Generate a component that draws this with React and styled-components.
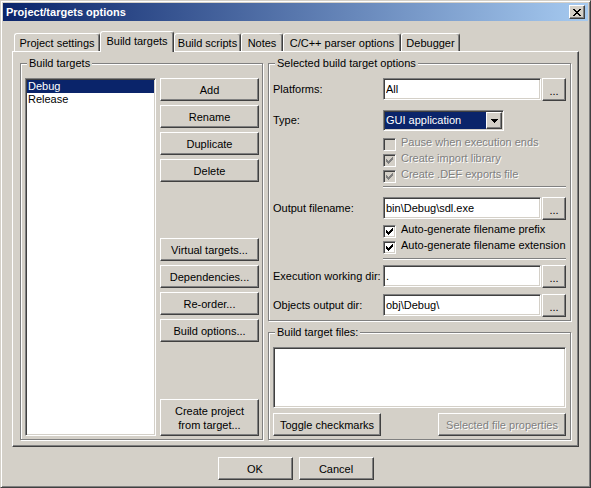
import React from 'react';
import styled, { createGlobalStyle, css } from 'styled-components';

const GlobalStyle = createGlobalStyle`
  html, body {
    margin: 0;
    padding: 0;
    background: #d4d0c8;
  }
  body {
    font-family: "Liberation Sans", Arial, sans-serif;
    font-size: 11px;
    color: #000;
  }
  * {
    box-sizing: border-box;
  }
`;

const raised = css`
  border: 1px solid;
  border-color: #fff #404040 #404040 #fff;
  box-shadow: inset -1px -1px 0 #808080;
`;

const sunken = css`
  border: 1px solid;
  border-color: #808080 #fff #fff #808080;
  box-shadow: inset 1px 1px 0 #404040, inset -1px -1px 0 #d4d0c8;
`;

const disabledText = css`
  color: #808080;
  text-shadow: 1px 1px 0 #fff;
`;

const Window = styled.div`
  width: 591px;
  height: 488px;
  background: #d4d0c8;
  border: 1px solid;
  border-color: #d4d0c8 #404040 #404040 #d4d0c8;
  box-shadow: inset 1px 1px 0 #fff, inset -1px -1px 0 #808080;
  padding: 2px;
  display: flex;
  flex-direction: column;
`;

const TitleBar = styled.div`
  height: 18px;
  display: flex;
  align-items: center;
  padding: 0 3px 0 3px;
  background: linear-gradient(to right, #0a246a, #a6caf0);
`;

const Title = styled.span`
  color: #fff;
  font-weight: bold;
  font-size: 11px;
`;

const CloseButton = styled.button`
  ${raised};
  margin-left: auto;
  width: 16px;
  height: 14px;
  padding: 1px 0 0 0;
  background: #d4d0c8;
  display: flex;
  align-items: center;
  justify-content: center;
`;

const TabRow = styled.div`
  margin: 10px 0 0 11px;
  height: 20px;
  display: flex;
  align-items: flex-end;
  position: relative;
  z-index: 1;
`;

const Tab = styled.div`
  width: ${(p) => p.$w}px;
  height: ${(p) => (p.$active ? 21 : 18)}px;
  margin-bottom: ${(p) => (p.$active ? -1 : 0)}px;
  padding-bottom: ${(p) => (p.$active ? 2 : 0)}px;
  background: #d4d0c8;
  border-top: 1px solid #fff;
  border-left: 1px solid #fff;
  border-right: 1px solid #404040;
  box-shadow: inset -1px 0 0 #808080;
  border-radius: 3px 3px 0 0;
  display: flex;
  align-items: center;
  justify-content: center;
  white-space: nowrap;
`;

const Panel = styled.div`
  margin-left: 9px;
  width: 567px;
  height: 396px;
  border: 1px solid;
  border-color: #fff #404040 #404040 #fff;
  box-shadow: inset -1px -1px 0 #808080;
  padding: 11px 7px 6px 7px;
  display: flex;
  gap: 5px;
`;

const Group = styled.div`
  position: relative;
  border: 1px solid #808080;
  box-shadow: inset 1px 1px 0 #fff, 1px 1px 0 #fff;
`;

const Caption = styled.span`
  position: absolute;
  top: -7px;
  left: 6px;
  padding: 0 2px;
  line-height: 13px;
  background: #d4d0c8;
  white-space: nowrap;
`;

const TargetsGroup = styled(Group)`
  width: 243px;
  display: flex;
  gap: 4px;
  padding: 14px 3px 3px 4px;
`;

const ListBox = styled.div`
  ${sunken};
  flex: 0 0 131px;
  background: #fff;
  padding: 1px;
`;

const ListItem = styled.div`
  height: 13px;
  line-height: 13px;
  padding-left: 1px;
  background: ${(p) => (p.$selected ? '#0a246a' : 'transparent')};
  color: ${(p) => (p.$selected ? '#fff' : '#000')};
`;

const ButtonColumn = styled.div`
  flex: 0 0 99px;
  display: flex;
  flex-direction: column;
  gap: 4px;
`;

const Button = styled.button`
  ${raised};
  width: ${(p) => (p.$w ? `${p.$w}px` : '100%')};
  height: ${(p) => p.$h || 23}px;
  margin-top: ${(p) => p.$mt || 0};
  padding: 0;
  background: #d4d0c8;
  font: inherit;
  color: #000;
  line-height: 14px;
  text-align: center;
  ${(p) => p.disabled && disabledText};
`;

const RightColumn = styled.div`
  width: 303px;
  display: flex;
  flex-direction: column;
  gap: 11px;
`;

const OptionsGroup = styled(Group)`
  height: 258px;
  padding: 14px 4px 0 4px;
  display: flex;
  flex-direction: column;
`;

const FieldRow = styled.div`
  display: flex;
  align-items: flex-start;
  flex: 0 0 auto;
  height: ${(p) => p.$h || 23}px;
  margin-top: ${(p) => p.$mt || 0}px;
`;

const Label = styled.span`
  width: 110px;
  line-height: ${(p) => p.$lh || 22}px;
  white-space: nowrap;
`;

const TextInput = styled.input`
  ${sunken};
  width: 158px;
  height: 22px;
  padding: 0 0 0 2px;
  background: #fff;
  font: inherit;
  color: #000;
  outline: none;
`;

const BrowseButton = styled(Button)`
  width: 24px;
  margin-left: 1px;
  padding-top: 3px;
`;

const Select = styled.div`
  ${sunken};
  width: 121px;
  height: 21px;
  padding: 1px;
  display: flex;
`;

const SelectValue = styled.span`
  flex: 1;
  background: #0a246a;
  color: #fff;
  line-height: 17px;
  padding-left: 1px;
`;

const ArrowButton = styled.span`
  ${raised};
  width: 16px;
  background: #d4d0c8;
  display: flex;
  align-items: center;
  justify-content: center;
`;

const CheckRow = styled.div`
  flex: 0 0 16px;
  height: 16px;
  margin-top: ${(p) => p.$mt || 0}px;
  margin-left: 110px;
  display: flex;
  align-items: flex-start;
  gap: 5px;
  white-space: nowrap;
  ${(p) => p.$disabled && disabledText};
`;

const Box = styled.span`
  ${sunken};
  width: 13px;
  height: 13px;
  flex: 0 0 13px;
  margin-top: 1px;
  background: ${(p) => (p.$disabled ? '#d4d0c8' : '#fff')};
  display: block;
`;

const CheckText = styled.span`
  line-height: 13px;
  margin-top: -1px;
`;

const Separator = styled.div`
  flex: 0 0 2px;
  margin: ${(p) => p.$mt}px 0 0 110px;
  height: 2px;
  border-top: 1px solid #808080;
  border-bottom: 1px solid #fff;
`;

const FilesGroup = styled(Group)`
  flex: 1;
  padding: 14px 4px 3px 4px;
  display: flex;
  flex-direction: column;
`;

const FilesList = styled.div`
  ${sunken};
  height: 61px;
  background: #fff;
`;

const ButtonRow = styled.div`
  margin-top: 5px;
  display: flex;
  justify-content: space-between;
`;

const Footer = styled.div`
  margin-top: 10px;
  display: flex;
  justify-content: center;
  gap: 6px;
`;

function CloseGlyph() {
  const rows = [
    [[0, 2], [6, 2]],
    [[1, 2], [5, 2]],
    [[2, 4]],
    [[3, 2]],
    [[2, 4]],
    [[1, 2], [5, 2]],
    [[0, 2], [6, 2]],
  ];
  return (
    <svg width="8" height="7" viewBox="0 0 8 7" shapeRendering="crispEdges">
      {rows.map((r, y) =>
        r.map(([x, w]) => <rect key={`${y}-${x}`} x={x} y={y} width={w} height={1} fill="#000" />)
      )}
    </svg>
  );
}

function DownArrow() {
  return (
    <svg width="7" height="4" viewBox="0 0 7 4" shapeRendering="crispEdges">
      <rect x="0" y="0" width="7" height="1" fill="#000" />
      <rect x="1" y="1" width="5" height="1" fill="#000" />
      <rect x="2" y="2" width="3" height="1" fill="#000" />
      <rect x="3" y="3" width="1" height="1" fill="#000" />
    </svg>
  );
}

const CHECK_COLS = [4, 5, 6, 5, 4, 3, 2];

function Checkbox({ checked, disabled, children, mt }) {
  const color = disabled ? '#808080' : '#000';
  return (
    <CheckRow $disabled={disabled} $mt={mt}>
      <Box $disabled={disabled}>
        {checked && (
          <svg width="11" height="11" viewBox="0 0 11 11" shapeRendering="crispEdges" style={{ display: 'block' }}>
            {CHECK_COLS.map((y, i) => (
              <rect key={i} x={2 + i} y={y} width={1} height={3} fill={color} />
            ))}
          </svg>
        )}
      </Box>
      <CheckText>{children}</CheckText>
    </CheckRow>
  );
}

function PathField({ label, value, mt }) {
  return (
    <FieldRow $mt={mt}>
      <Label>{label}</Label>
      <TextInput readOnly defaultValue={value} />
      <BrowseButton>...</BrowseButton>
    </FieldRow>
  );
}

const tabs = [
  { name: 'Project settings', w: 86 },
  { name: 'Build targets', w: 74, active: true },
  { name: 'Build scripts', w: 67 },
  { name: 'Notes', w: 42 },
  { name: 'C/C++ parser options', w: 118 },
  { name: 'Debugger', w: 59 },
];

export default function App() {
  return (
    <>
      <GlobalStyle />
      <Window>
        <TitleBar>
          <Title>Project/targets options</Title>
          <CloseButton aria-label="Close">
            <CloseGlyph />
          </CloseButton>
        </TitleBar>

        <TabRow>
          {tabs.map((t) => (
            <Tab key={t.name} $w={t.w} $active={t.active}>
              {t.name}
            </Tab>
          ))}
        </TabRow>

        <Panel>
          <TargetsGroup>
            <Caption>Build targets</Caption>
            <ListBox>
              <ListItem $selected>Debug</ListItem>
              <ListItem>Release</ListItem>
            </ListBox>
            <ButtonColumn>
              <Button>Add</Button>
              <Button>Rename</Button>
              <Button>Duplicate</Button>
              <Button>Delete</Button>
              <Button $mt="52px">Virtual targets...</Button>
              <Button>Dependencies...</Button>
              <Button>Re-order...</Button>
              <Button>Build options...</Button>
              <Button $h={37} $mt="auto">
                Create project
                <br />
                from target...
              </Button>
            </ButtonColumn>
          </TargetsGroup>

          <RightColumn>
            <OptionsGroup>
              <Caption>Selected build target options</Caption>
              <PathField label="Platforms:" value="All" />
              <FieldRow $mt={9} $h={21}>
                <Label $lh={21}>Type:</Label>
                <Select>
                  <SelectValue>GUI application</SelectValue>
                  <ArrowButton>
                    <DownArrow />
                  </ArrowButton>
                </Select>
              </FieldRow>
              <Checkbox disabled mt={6}>Pause when execution ends</Checkbox>
              <Checkbox disabled checked>Create import library</Checkbox>
              <Checkbox disabled checked>Create .DEF exports file</Checkbox>
              <Separator $mt={1} />
              <PathField label="Output filename:" value="bin\Debug\sdl.exe" mt={9} />
              <Checkbox checked mt={4}>Auto-generate filename prefix</Checkbox>
              <Checkbox checked>Auto-generate filename extension</Checkbox>
              <Separator $mt={2} />
              <PathField label="Execution working dir:" value="." mt={5} />
              <PathField label="Objects output dir:" value="obj\Debug\" mt={6} />
            </OptionsGroup>

            <FilesGroup>
              <Caption>Build target files:</Caption>
              <FilesList />
              <ButtonRow>
                <Button $w={108}>Toggle checkmarks</Button>
                <Button $w={128} disabled>
                  Selected file properties
                </Button>
              </ButtonRow>
            </FilesGroup>
          </RightColumn>
        </Panel>

        <Footer>
          <Button $w={75}>OK</Button>
          <Button $w={75}>Cancel</Button>
        </Footer>
      </Window>
    </>
  );
}
